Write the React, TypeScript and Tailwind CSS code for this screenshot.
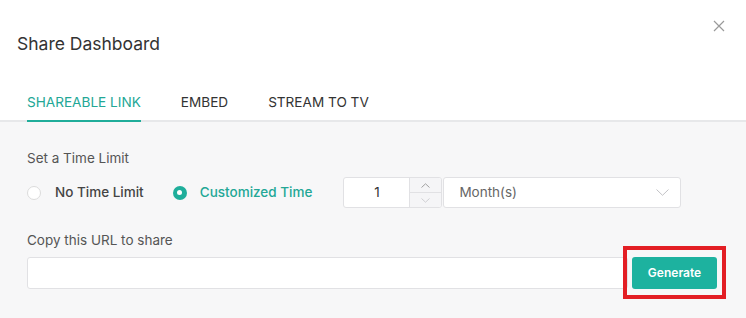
import React from "react";

function Radio({ checked }: { checked?: boolean }) {
  return checked ? (
    <span className="flex h-[14px] w-[14px] items-center justify-center rounded-full bg-[#1fae9b]">
      <span className="h-[5px] w-[5px] rounded-full bg-white" />
    </span>
  ) : (
    <span className="h-[14px] w-[14px] rounded-full border border-[#dcdcdc] bg-white" />
  );
}

export default function App() {
  return (
    <div
      className="relative h-[318px] w-[746px] overflow-hidden bg-white"
      style={{ fontFamily: "Inter, 'Noto Sans', sans-serif" }}
    >
      {/* header */}
      <div className="pl-[17px] pt-[33px] text-[17.5px] leading-[22px] text-[#333]">Share Dashboard</div>
      <button className="absolute right-[21px] top-[20px] h-[12px] w-[12px] text-[#9a9a9a]">
        <svg viewBox="0 0 12 12" width="12" height="12" stroke="currentColor" strokeWidth="1.2" fill="none">
          <path d="M1 1L11 11M11 1L1 11" />
        </svg>
      </button>

      {/* tabs */}
      <div className="mt-[39px] flex border-b-2 border-[#e7e8ea] pl-[27px] text-[13.6px] leading-[16px]">
        <div className="-mb-[2px] border-b-2 border-[#20ad9a] pb-[10px] text-[#23a796]">SHAREABLE LINK</div>
        <div className="ml-[40px] text-[#333]">EMBED</div>
        <div className="ml-[40px] text-[#333]">STREAM TO TV</div>
      </div>

      {/* body */}
      <div className="h-[200px] bg-[#f7f7f8] px-[27px] pt-[28px]">
        <div className="text-[13.5px] leading-[16px] text-[#555]">Set a Time Limit</div>

        <div className="mt-[11px] flex h-[31px] items-center text-[13.5px]">
          <Radio />
          <span className="ml-[14px] font-medium text-[#444]">No Time Limit</span>
          <span className="ml-[29px]">
            <Radio checked />
          </span>
          <span className="ml-[13px] font-medium text-[#23a796]">Customized Time</span>

          <div className="ml-[31px] flex h-[31px] w-[99px] overflow-hidden rounded-[3px] border border-[#e1e1e4] bg-white">
            <div className="flex flex-1 items-center justify-center text-[13.5px] text-[#333]">1</div>
            <div className="flex w-[32px] flex-col border-l border-[#e1e1e4] bg-[#f5f5f7]">
              <div className="flex flex-1 items-center justify-center border-b border-[#e1e1e4]">
                <svg width="9" height="5" viewBox="0 0 9 5" fill="none" stroke="#a0a0a0" strokeWidth="1">
                  <path d="M0.5 4.5L4.5 0.8L8.5 4.5" />
                </svg>
              </div>
              <div className="flex flex-1 items-center justify-center">
                <svg width="9" height="5" viewBox="0 0 9 5" fill="none" stroke="#cfcfd3" strokeWidth="1">
                  <path d="M0.5 0.5L4.5 4.2L8.5 0.5" />
                </svg>
              </div>
            </div>
          </div>

          <div className="ml-[1px] flex h-[31px] w-[238px] items-center justify-between rounded-[3px] border border-[#e1e1e4] bg-white pl-[15px] pr-[11px]">
            <span className="text-[13.5px] text-[#666]">Month(s)</span>
            <svg width="13" height="7" viewBox="0 0 13 7" fill="none" stroke="#c2c2c6" strokeWidth="1">
              <path d="M0.5 0.5L6.5 6.3L12.5 0.5" />
            </svg>
          </div>
        </div>

        <div className="mt-[24px] text-[13.5px] leading-[16px] text-[#555]">Copy this URL to share</div>

        <div className="mt-[9px] flex h-[32px] items-stretch">
          <div className="flex-1 rounded-[3px] border border-[#e1e1e4] bg-white" />
          <div className="relative ml-[4px]">
            <button className="h-[32px] w-[85px] rounded-[3px] bg-[#1db29f] text-[12px] font-semibold text-white">
              Generate
            </button>
            <div className="pointer-events-none absolute -bottom-[10px] -left-[9px] -right-[9px] -top-[11px] border-[4px] border-[#e31e24]" />
          </div>
          <div className="w-[2px]" />
        </div>
      </div>
    </div>
  );
}
